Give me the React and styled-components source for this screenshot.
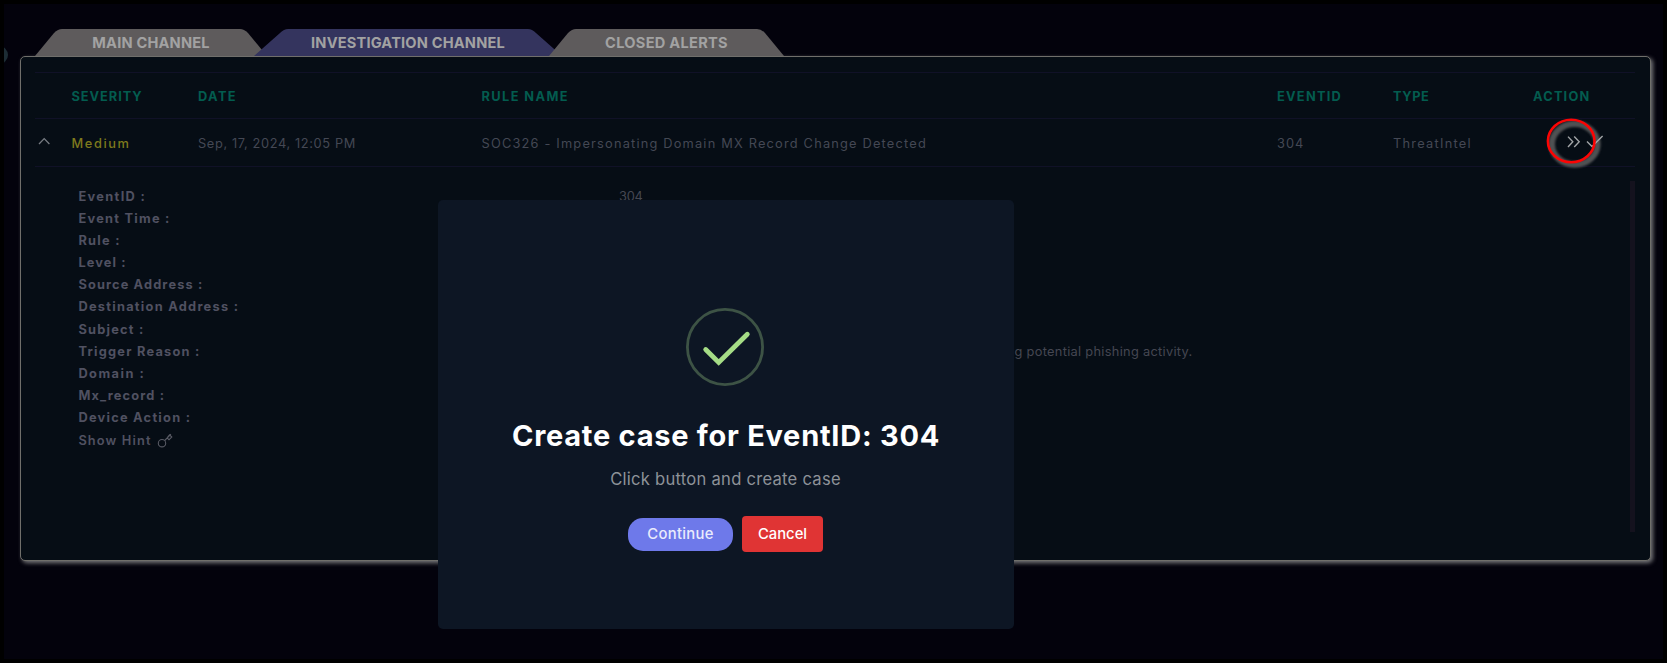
import React from "react";
import styled, { createGlobalStyle } from "styled-components";

const GlobalStyle = createGlobalStyle`
  *, *::before, *::after { box-sizing: border-box; }
  body { margin: 0; background: #000; }
  #root { font-family: "Inter", "Liberation Sans", sans-serif; }
`;

const Screen = styled.main`
  position: relative;
  height: 663px;
  border: 4px solid #000;
  background: #03020c;
  overflow: hidden;
`;

const SideHandle = styled.span`
  position: absolute;
  left: -14px;
  top: 42px;
  width: 18px;
  height: 18px;
  border-radius: 50%;
  background: #1d2d35;
`;

const Tabs = styled.nav`
  display: flex;
  padding: 25px 0 0 31px;
`;

const tabShape = ({ $width: w, $left: l, $right: r }) =>
  `M0 27L${l - 6} 4Q${l - 2} 0 ${l + 2} 0H${w - r - 2}Q${w - r + 2} 0 ${w - r + 6} 4L${w} 27Z`;

const Tab = styled.button`
  width: ${(p) => p.$width}px;
  height: 27px;
  margin: 0 0 0 ${(p) => p.$overlap || 0}px;
  padding: 2px 0 0;
  border: 0;
  background: ${(p) => (p.$active ? "#34345e" : "#5e5b5c")};
  color: #a2a2a2;
  font: 700 14.6px/25px "Inter", sans-serif;
  letter-spacing: ${(p) => p.$tracking}px;
  text-align: center;
  white-space: nowrap;
  clip-path: path("${tabShape}");
`;

const Panel = styled.section`
  height: 505px;
  margin: 0 12px 0 16px;
  padding: 15px 15px 0 14px;
  border: 1px solid #706f6b;
  border-radius: 5px;
  background: #060d15;
  box-shadow: 2px 2px 4px #77777a;
`;

const Row = styled.div`
  display: grid;
  grid-template-columns: 36.5px 126.5px 283.5px 795.5px 116px 140px 1fr;
  align-items: center;
  height: ${(p) => (p.$head ? 46 : 48)}px;
  border-top: 1px solid #101127;
`;

const HeadCell = styled.span`
  padding-top: 1px;
  color: #035c4f;
  font-size: 12.8px;
  font-weight: 700;
  letter-spacing: ${(p) => p.$tracking}px;
`;

const Cell = styled.span`
  padding-top: 1px;
  color: ${(p) => p.$color || "#444854"};
  font-size: 12.8px;
  font-weight: ${(p) => p.$weight || 400};
  letter-spacing: ${(p) => p.$tracking}px;
  white-space: nowrap;
`;

const ExpandIcon = styled.svg`
  display: block;
  margin: -3px 0 0 3px;
`;

const Actions = styled.div`
  position: relative;
  height: 47px;
`;

const ActionIcons = styled.svg`
  display: block;
  overflow: visible;
`;

const Details = styled.div`
  display: flex;
  justify-content: space-between;
  height: 365px;
  padding-top: 14px;
  border-top: 1px solid #101127;
`;

const Fields = styled.div`
  padding: 4.2px 0 0 43.4px;
`;

const Field = styled.div`
  display: grid;
  grid-template-columns: 540.6px 573.5px;
  align-items: center;
  height: 22.15px;
`;

const Label = styled.span`
  color: #505161;
  font-size: 12.8px;
  font-weight: ${(p) => p.$weight || 700};
  letter-spacing: ${(p) => p.$tracking}px;
`;

const Value = styled.span`
  color: #454752;
  font-size: 12.8px;
  letter-spacing: ${(p) => p.$tracking}px;
  text-align: ${(p) => (p.$end ? "right" : "left")};
`;

const Hint = styled.div`
  display: flex;
  align-items: center;
  gap: 5.5px;
  height: 24px;
`;

const ScrollTrack = styled.div`
  width: 5px;
  height: 351px;
  background: #14121e;
`;

const Modal = styled.div`
  position: absolute;
  left: 434px;
  top: 196px;
  width: 576px;
  height: 429px;
  display: flex;
  flex-direction: column;
  align-items: center;
  padding-top: 108px;
  border-radius: 5px;
  background: #0d1624;
`;

const SuccessIcon = styled.svg`
  display: block;
  margin-right: 2px;
`;

const Title = styled.h2`
  margin: 33px 0 0;
  color: #fff;
  font-size: 29px;
  font-weight: 700;
  line-height: 34px;
  letter-spacing: 0.74px;
  white-space: nowrap;
`;

const Message = styled.p`
  margin: 14px 1px 0 0;
  color: #8d9298;
  font-size: 16.6px;
  line-height: 25px;
  letter-spacing: 0.25px;
`;

const Buttons = styled.div`
  display: flex;
  align-items: center;
  gap: 9px;
  height: 36px;
  margin: 24px 1px 0 0;
`;

const Button = styled.button`
  width: ${(p) => (p.$danger ? 81 : 105)}px;
  height: ${(p) => (p.$danger ? 36 : 33)}px;
  padding: 0;
  border: 0;
  border-radius: ${(p) => (p.$danger ? 4 : 15)}px;
  background: ${(p) => (p.$danger ? "#e03434" : "#6e79ea")};
  color: ${(p) => (p.$danger ? "#fff" : "#e9ebfc")};
  font: 500 14.8px/1 "Inter", sans-serif;
  letter-spacing: ${(p) => (p.$danger ? 0.02 : 0.32)}px;
`;

const fields = [
  { label: "EventID :", tracking: 1.35, value: "304", valueTracking: -0.24 },
  { label: "Event Time :", tracking: 1.26 },
  { label: "Rule :", tracking: 1.25 },
  { label: "Level :", tracking: 1.1 },
  { label: "Source Address :", tracking: 1.13 },
  { label: "Destination Address :", tracking: 1.27 },
  { label: "Subject :", tracking: 1.22 },
  {
    label: "Trigger Reason :",
    tracking: 1.24,
    value: "indicating potential phishing activity.",
    valueTracking: 0.3,
    end: true,
  },
  { label: "Domain :", tracking: 1.48 },
  { label: "Mx_record :", tracking: 1.15 },
  { label: "Device Action :", tracking: 1.25 },
];

export default function App() {
  return (
    <Screen>
      <GlobalStyle />
      <SideHandle />
      <Tabs>
        <Tab $width={232} $left={25} $right={25} $tracking={0.2}>MAIN CHANNEL</Tab>
        <Tab $active $width={308} $left={32} $right={32} $overlap={-13} $tracking={0.18}>
          INVESTIGATION CHANNEL
        </Tab>
        <Tab $width={235} $left={25} $right={25} $overlap={-13} $tracking={0.28}>CLOSED ALERTS</Tab>
      </Tabs>

      <Panel>
        <Row $head>
          <span />
          <HeadCell $tracking={0.95}>SEVERITY</HeadCell>
          <HeadCell $tracking={1.4}>DATE</HeadCell>
          <HeadCell $tracking={1.4}>RULE NAME</HeadCell>
          <HeadCell $tracking={1.27}>EVENTID</HeadCell>
          <HeadCell $tracking={0.57}>TYPE</HeadCell>
          <HeadCell $tracking={1.2}>ACTION</HeadCell>
        </Row>
        <Row>
          <ExpandIcon width="13" height="8" viewBox="0 0 13 8" fill="none" stroke="#777b82" strokeWidth="1.3">
            <path d="M1 7L6.2 1.6L11.4 7" />
          </ExpandIcon>
          <Cell $color="#7e7a1d" $weight={500} $tracking={1.6}>Medium</Cell>
          <Cell $tracking={0.63}>Sep, 17, 2024, 12:05 PM</Cell>
          <Cell $tracking={1.195}>SOC326 - Impersonating Domain MX Record Change Detected</Cell>
          <Cell $tracking={1}>304</Cell>
          <Cell $tracking={1.26}>ThreatIntel</Cell>
          <Actions>
            <ActionIcons width="90" height="47" viewBox="1533 119 90 47" fill="none">
              <defs>
                <filter id="ringShadow" x="-20%" y="-20%" width="140%" height="140%">
                  <feGaussianBlur stdDeviation="0.8" />
                </filter>
              </defs>
              <ellipse cx="1574.6" cy="144.2" rx="22.8" ry="20.4" stroke="#505153" strokeWidth="6.4" filter="url(#ringShadow)" />
              <g stroke="#a2a5a8" strokeWidth="1.4">
                <path d="M1568 136.6L1572.8 141.8L1568 147M1574.2 136.6L1579.2 141.8L1574.2 147" />
                <path d="M1587 141.6L1592 146.6L1602.6 136" />
              </g>
              <ellipse cx="1571.2" cy="141" rx="23.3" ry="21.2" stroke="#fc0404" strokeWidth="2.6" />
            </ActionIcons>
          </Actions>
        </Row>

        <Details>
          <Fields>
            {fields.map((f) => (
              <Field key={f.label}>
                <Label $tracking={f.tracking}>{f.label}</Label>
                {f.value && (
                  <Value $tracking={f.valueTracking} $end={f.end}>{f.value}</Value>
                )}
              </Field>
            ))}
            <Hint>
              <Label $weight={600} $tracking={1.15}>Show Hint</Label>
              <svg width="16" height="15" viewBox="0 0 16 15" fill="none" stroke="#585a64" strokeWidth="1.1">
                <circle cx="5" cy="10.2" r="3.7" />
                <path d="M7.7 7.5L13.9 1.2M10.2 4.9L12 6.8L14.8 4L12.6 1.8L10.6 4" />
              </svg>
            </Hint>
          </Fields>
          <ScrollTrack />
        </Details>
      </Panel>

      <Modal role="dialog">
        <SuccessIcon width="78" height="78" viewBox="0 0 78 78" fill="none">
          <circle cx="39" cy="39" r="37.6" stroke="#3d5345" strokeWidth="2.8" />
          <path d="M19.7 41.5L32.7 54.4L61.3 26.2" stroke="#a5dc86" strokeWidth="4.8" strokeLinecap="round" />
        </SuccessIcon>
        <Title>Create case for EventID: 304</Title>
        <Message>Click button and create case</Message>
        <Buttons>
          <Button>Continue</Button>
          <Button $danger>Cancel</Button>
        </Buttons>
      </Modal>
    </Screen>
  );
}
